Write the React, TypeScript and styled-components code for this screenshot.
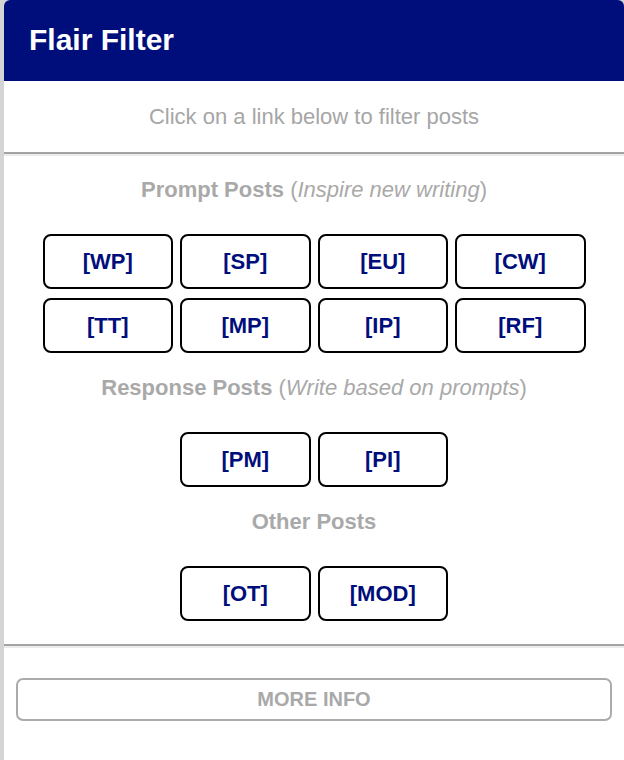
import React from "react";
import styled, { createGlobalStyle } from "styled-components";

const Global = createGlobalStyle`
  html, body { margin: 0; padding: 0; }
  body {
    background: #d4d4d4;
    font-family: "Liberation Sans", Arial, Helvetica, sans-serif;
    width: 624px;
    height: 760px;
    overflow: hidden;
  }
`;

const Panel = styled.div`
  margin-left: 4px;
  width: 620px;
  height: 760px;
  background: #ffffff;
  border-radius: 6px 6px 0 0;
  overflow: hidden;
  display: flex;
  flex-direction: column;
`;

const Header = styled.h1`
  margin: 0;
  height: 81px;
  box-sizing: border-box;
  background: #000e7c;
  color: #ffffff;
  font-size: 30px;
  font-weight: 700;
  padding: 0 0 1px 25px;
  display: flex;
  align-items: center;
`;

const Intro = styled.div`
  height: 71px;
  display: flex;
  align-items: center;
  justify-content: center;
  color: #a6a6a6;
  font-size: 22px;
  border-bottom: 2px solid #a3a3a3;
  box-shadow: 0 2px 0 #ececec;
`;

const Body = styled.div`
  display: flex;
  flex-direction: column;
  align-items: center;
  padding: 1px 0 23px;
  border-bottom: 2px solid #a3a3a3;
  box-shadow: 0 2px 0 #ececec;
`;

const SectionTitle = styled.div`
  margin: 23px 0 32px;
  height: 24px;
  line-height: 24px;
  font-size: 22px;
  font-weight: 700;
  color: #a9a9a9;
  text-align: center;
  em {
    font-weight: 400;
    font-style: italic;
  }
  span {
    font-weight: 400;
  }
`;

const Grid = styled.div<{ $cols: number }>`
  display: grid;
  grid-template-columns: repeat(${(p) => p.$cols}, 130.5px);
  column-gap: 7px;
  row-gap: 9px;
  justify-content: center;
`;

const Flair = styled.a`
  box-sizing: border-box;
  height: 55px;
  border: 2px solid #000;
  border-radius: 8px;
  display: flex;
  align-items: center;
  justify-content: center;
  color: #000e7c;
  font-size: 22px;
  font-weight: 700;
  text-decoration: none;
  cursor: pointer;
`;

const Footer = styled.div`
  padding: 32px 12px 0;
`;

const MoreInfo = styled.button`
  width: 100%;
  height: 43px;
  box-sizing: border-box;
  border: 2px solid #ababab;
  border-radius: 7px;
  background: #fff;
  color: #a9a9a9;
  font-family: "Liberation Sans", Arial, sans-serif;
  font-size: 20px;
  font-weight: 700;
  cursor: pointer;
`;

const prompt = ["[WP]", "[SP]", "[EU]", "[CW]", "[TT]", "[MP]", "[IP]", "[RF]"];
const response = ["[PM]", "[PI]"];
const other = ["[OT]", "[MOD]"];

export default function App() {
  return (
    <>
      <Global />
      <Panel>
        <Header>Flair Filter</Header>
        <Intro>Click on a link below to filter posts</Intro>
        <Body>
          <SectionTitle>
            Prompt Posts <span>(</span>
            <em>Inspire new writing</em>
            <span>)</span>
          </SectionTitle>
          <Grid $cols={4}>
            {prompt.map((f) => (
              <Flair key={f}>{f}</Flair>
            ))}
          </Grid>
          <SectionTitle>
            Response Posts <span>(</span>
            <em>Write based on prompts</em>
            <span>)</span>
          </SectionTitle>
          <Grid $cols={2}>
            {response.map((f) => (
              <Flair key={f}>{f}</Flair>
            ))}
          </Grid>
          <SectionTitle>Other Posts</SectionTitle>
          <Grid $cols={2}>
            {other.map((f) => (
              <Flair key={f}>{f}</Flair>
            ))}
          </Grid>
        </Body>
        <Footer>
          <MoreInfo>MORE INFO</MoreInfo>
        </Footer>
      </Panel>
    </>
  );
}
